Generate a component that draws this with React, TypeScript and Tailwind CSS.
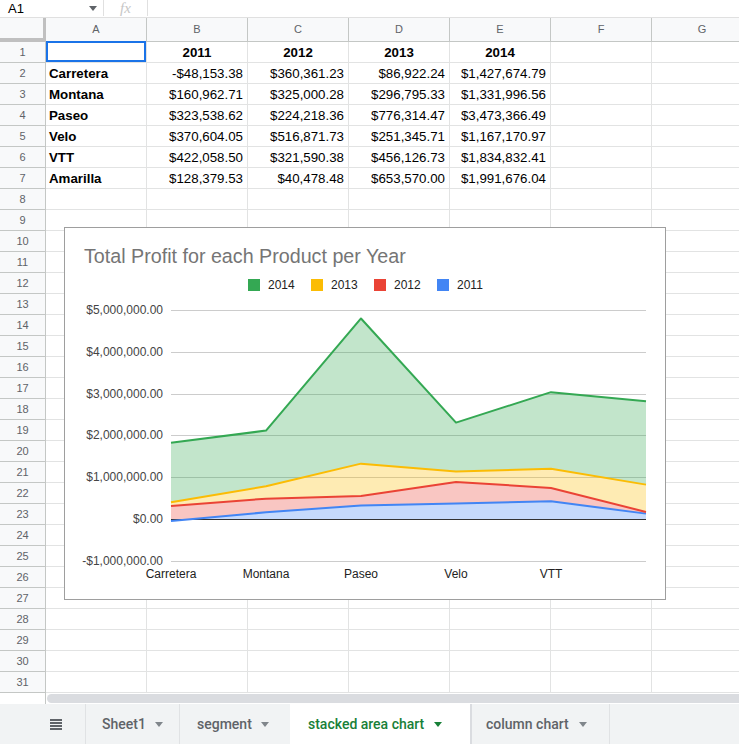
import React from "react";

const COLS = ["A", "B", "C", "D", "E", "F", "G"];

const DATA: string[][] = [
  ["", "2011", "2012", "2013", "2014"],
  ["Carretera", "-$48,153.38", "$360,361.23", "$86,922.24", "$1,427,674.79"],
  ["Montana", "$160,962.71", "$325,000.28", "$296,795.33", "$1,331,996.56"],
  ["Paseo", "$323,538.62", "$224,218.36", "$776,314.47", "$3,473,366.49"],
  ["Velo", "$370,604.05", "$516,871.73", "$251,345.71", "$1,167,170.97"],
  ["VTT", "$422,058.50", "$321,590.38", "$456,126.73", "$1,834,832.41"],
  ["Amarilla", "$128,379.53", "$40,478.48", "$653,570.00", "$1,991,676.04"],
];

const SERIES = [
  { name: "2011", color: "#4285f4", values: [-48153.38, 160962.71, 323538.62, 370604.05, 422058.5, 128379.53] },
  { name: "2012", color: "#ea4335", values: [360361.23, 325000.28, 224218.36, 516871.73, 321590.38, 40478.48] },
  { name: "2013", color: "#fbbc04", values: [86922.24, 296795.33, 776314.47, 251345.71, 456126.73, 653570.0] },
  { name: "2014", color: "#34a853", values: [1427674.79, 1331996.56, 3473366.49, 1167170.97, 1834832.41, 1991676.04] },
];

const CATS = ["Carretera", "Montana", "Paseo", "Velo", "VTT", "Amarilla"];

function Triangle({ color }: { color: string }) {
  return (
    <span
      className="inline-block w-0 h-0 border-l-[4px] border-r-[4px] border-t-[5px] border-l-transparent border-r-transparent"
      style={{ borderTopColor: color }}
    />
  );
}

function Chart() {
  const xs = CATS.map((_, i) => 106 + 95 * i);
  const y = (v: number) => 291 - (v / 1e6) * 41.8;
  const cum: number[][] = [];
  let prev = CATS.map(() => 0);
  const bases: number[][] = [];
  SERIES.forEach((s) => {
    bases.push(prev);
    const next = prev.map((p, i) => p + s.values[i]);
    cum.push(next);
    prev = next;
  });
  const pts = (arr: number[]) => arr.map((v, i) => `${xs[i]},${y(v).toFixed(2)}`);
  const gridYs = [0, 1, 2, 3, 4, 5, 6].map((k) => 82 + 41.8 * k);
  const yLabels = [
    "$5,000,000.00",
    "$4,000,000.00",
    "$3,000,000.00",
    "$2,000,000.00",
    "$1,000,000.00",
    "$0.00",
    "-$1,000,000.00",
  ];
  const legend = [SERIES[3], SERIES[2], SERIES[1], SERIES[0]];
  return (
    <svg width="600" height="371" viewBox="0 0 600 371" className="block" style={{ fontFamily: '"Liberation Sans", Arial, sans-serif' }}>
      <text x="19" y="28" dominantBaseline="central" fontSize="19.7" fill="#757575">
        Total Profit for each Product per Year
      </text>
      {legend.map((s, i) => (
        <g key={s.name}>
          <rect x={183 + 63 * i} y={51} width={12} height={12} fill={s.color} />
          <text x={203 + 63 * i} y={57} dominantBaseline="central" fontSize="12" fill="#222">
            {s.name}
          </text>
        </g>
      ))}
      {gridYs.map((gy, i) => (
        <line key={i} x1={106} x2={581} y1={Math.round(gy) + 0.5} y2={Math.round(gy) + 0.5} stroke="#cccccc" strokeWidth={1} />
      ))}
      {yLabels.map((l, i) => (
        <text key={l} x={98} y={gridYs[i]} textAnchor="end" dominantBaseline="central" fontSize="12" fill="#444">
          {l}
        </text>
      ))}
      {SERIES.map((s, k) => (
        <polygon
          key={s.name}
          points={[...pts(cum[k]), ...pts(bases[k]).reverse()].join(" ")}
          fill={s.color}
          fillOpacity={0.3}
        />
      ))}
      <line x1={106} x2={581} y1={291.5} y2={291.5} stroke="#333333" strokeWidth={1} />
      {SERIES.map((s, k) => (
        <polyline
          key={s.name}
          points={pts(cum[k]).join(" ")}
          fill="none"
          stroke={s.color}
          strokeWidth={2}
          strokeLinejoin="round"
        />
      ))}
      {CATS.slice(0, 5).map((c, i) => (
        <text key={c} x={xs[i]} y={346} textAnchor="middle" dominantBaseline="central" fontSize="12" fill="#222">
          {c}
        </text>
      ))}
    </svg>
  );
}

function DataRow({ n }: { n: number }) {
  const row = DATA[n - 1];
  return (
    <div className="flex h-[21px]">
      <div className="w-[46px] shrink-0 h-full bg-[#f8f9fa] border-r border-b border-[#c4c7c5] flex items-center justify-center pt-[1px] text-[11px] text-[#5f6368]">
        {n}
      </div>
      {COLS.map((c, ci) => {
        const v = row ? row[ci] ?? "" : "";
        const isHeader = n === 1;
        const isName = ci === 0;
        return (
          <div
            key={c}
            className={
              "relative w-[101px] shrink-0 h-full border-r border-b border-[#e2e3e3] flex items-center pt-[2px] text-[13.3px] text-black whitespace-nowrap " +
              (isHeader ? "justify-center font-bold" : isName ? "justify-start pl-[3px] font-bold" : "justify-end pr-[4px]")
            }
          >
            {v}
            {n === 1 && ci === 0 && <div className="absolute inset-0 -top-px border-2 border-[#1a73e8]" />}
          </div>
        );
      })}
    </div>
  );
}

export default function App() {
  const rowNums = Array.from({ length: 31 }, (_, i) => i + 1);
  return (
    <div
      className="relative w-[739px] h-[744px] overflow-hidden bg-white"
      style={{ fontFamily: '"Liberation Sans", Arial, sans-serif' }}
    >
      {/* formula bar */}
      <div className="h-[18px] flex items-stretch border-b border-[#e0e0e0]">
        <div className="w-[103px] shrink-0 flex items-center pl-[8px] pr-[6px] justify-between">
          <span className="text-[13px] text-black leading-none">A1</span>
          <Triangle color="#5f6368" />
        </div>
        <div className="w-[45px] shrink-0 h-[16px] border-l border-r border-[#e0e0e0] flex items-center justify-center">
          <span className="italic text-[15px] leading-none text-[#c6c6c6]" style={{ fontFamily: '"Liberation Serif", serif' }}>
            fx
          </span>
        </div>
      </div>

      {/* column headers */}
      <div className="flex h-[24px]">
        <div className="w-[46px] shrink-0 h-full bg-[#f8f9fa] border-r-[3px] border-b-[4px] border-[#c0c0c0]" />
        {COLS.map((c) => (
          <div
            key={c}
            className="w-[101px] shrink-0 h-full bg-[#f8f9fa] border-r border-b border-[#c4c7c5] flex items-center justify-center text-[11px] text-[#5f6368]"
          >
            {c}
          </div>
        ))}
      </div>

      {/* rows */}
      <div>
        {rowNums.map((n) => (
          <DataRow key={n} n={n} />
        ))}
      </div>

      {/* horizontal scrollbar */}
      <div className="flex h-[11px]">
        <div className="w-[46px] shrink-0 h-full border-r border-[#c4c7c5] bg-white" />
        <div className="flex-1 h-full bg-white pl-[1px] pt-[1px]">
          <div className="h-[9px] w-[720px] rounded-full bg-[#dadce0]" />
        </div>
      </div>

      {/* sheet tabs */}
      <div className="flex h-[40px] bg-[#f1f3f4] text-[14px] font-medium" style={{ fontFamily: "Roboto, sans-serif" }}>
        <div className="w-[86px] shrink-0 h-full border-r border-[#e0e2e4] flex items-center pl-[50px]">
          <div className="flex flex-col gap-[1px]">
            <span className="block w-[12px] h-[2px] bg-[#5f6368]" />
            <span className="block w-[12px] h-[2px] bg-[#5f6368]" />
            <span className="block w-[12px] h-[2px] bg-[#5f6368]" />
            <span className="block w-[12px] h-[2px] bg-[#5f6368]" />
          </div>
        </div>
        <div className="w-[94px] shrink-0 h-full border-r border-[#e0e2e4] flex items-center pl-[16px] gap-[9px] text-[#5f6368]">
          <span>Sheet1</span>
          <Triangle color="#80868b" />
        </div>
        <div className="w-[110px] shrink-0 h-full flex items-center pl-[17px] gap-[9px] text-[#5f6368]">
          <span>segment</span>
          <Triangle color="#80868b" />
        </div>
        <div className="w-[180px] shrink-0 h-full bg-white flex items-center pl-[18px] gap-[10px] text-[#188038]">
          <span>stacked area chart</span>
          <Triangle color="#188038" />
        </div>
        <div className="w-[140px] shrink-0 h-full border-l-2 border-r border-l-[#dadce0] border-r-[#e0e2e4] flex items-center pl-[14px] gap-[10px] text-[#5f6368]">
          <span>column chart</span>
          <Triangle color="#80868b" />
        </div>
      </div>

      {/* chart overlay */}
      <div className="absolute left-[64px] top-[227px] w-[602px] h-[373px] bg-white border border-[#9e9e9e]">
        <Chart />
      </div>
    </div>
  );
}
